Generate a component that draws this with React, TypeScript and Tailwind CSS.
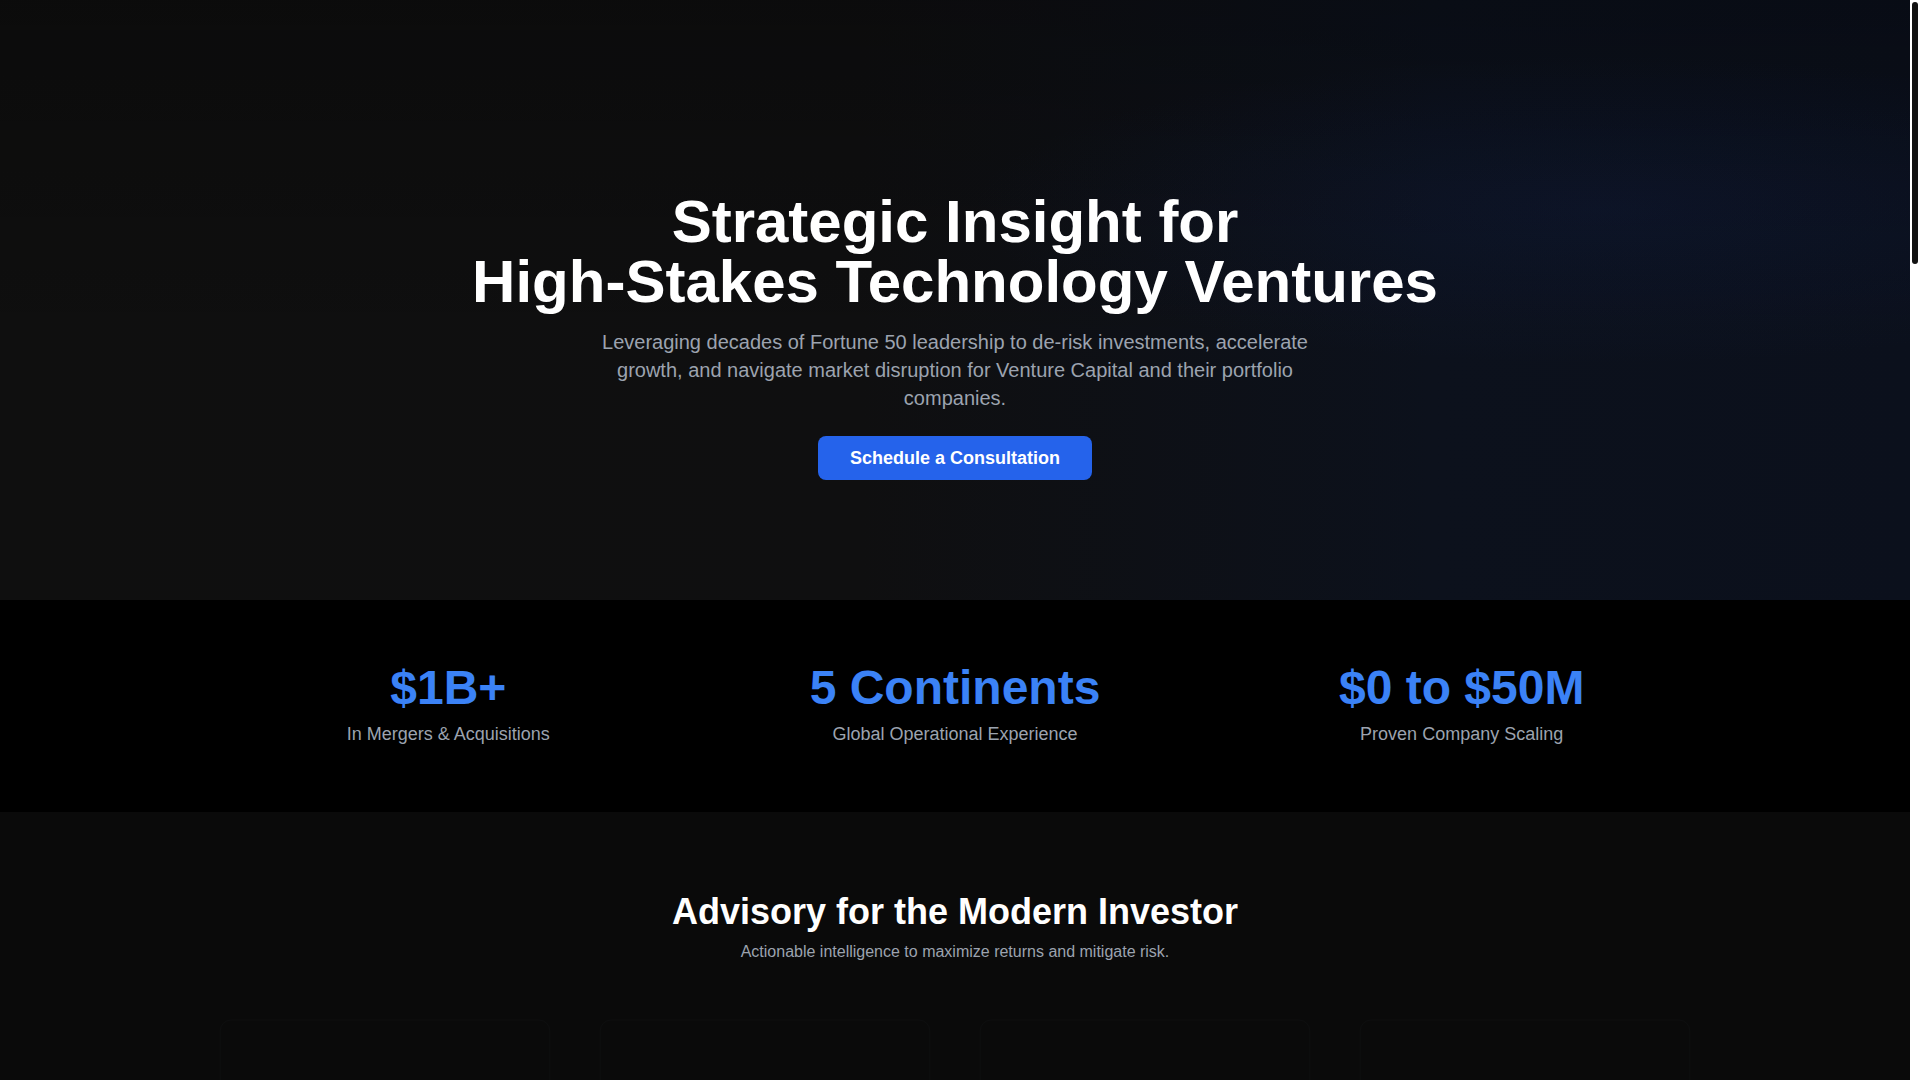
import { TrendingUp, ShieldCheck, Globe, Rocket, Mail, Linkedin } from "lucide-react";

const stats = [
  { value: "$1B+", label: "In Mergers & Acquisitions" },
  { value: "5 Continents", label: "Global Operational Experience" },
  { value: "$0 to $50M", label: "Proven Company Scaling" },
];

const services = [
  {
    icon: TrendingUp,
    title: "Due Diligence",
    body: "Deep technical and operational assessment of targets before capital is committed.",
  },
  {
    icon: ShieldCheck,
    title: "Risk Mitigation",
    body: "Identify execution risk early and put the right guardrails around every investment.",
  },
  {
    icon: Globe,
    title: "Global Expansion",
    body: "Playbooks for entering new markets, built from operating across five continents.",
  },
  {
    icon: Rocket,
    title: "Portfolio Acceleration",
    body: "Hands-on guidance that helps portfolio companies scale revenue and teams.",
  },
];

const steps = [
  { n: "01", title: "Assess", body: "Understand the thesis, the team and the technology behind it." },
  { n: "02", title: "Advise", body: "Deliver clear, actionable recommendations to the partners." },
  { n: "03", title: "Accelerate", body: "Work alongside leadership to turn the plan into results." },
];

// thin page scrollbar of the live site, drawn over the right edge
function ScrollRail() {
  return (
    <div aria-hidden className="fixed top-0 right-0 w-[10px] h-screen bg-white px-[2px] pt-[2px]">
      <div className="h-[262px] rounded-[4px] bg-[#111111]" />
    </div>
  );
}

export default function App() {
  return (
    <div className="bg-white">
      <div className="mr-[10px] bg-[#0a0a0a] text-white [font-family:'Liberation_Sans',Arial,sans-serif]">
        {/* Hero */}
        <section className="h-[600px] pt-48 pb-30 px-6 text-center [background:radial-gradient(ellipse_at_84%_35%,rgba(23,45,110,0.16),transparent_28%),linear-gradient(to_bottom,rgba(0,0,0,0.25),rgba(0,0,0,0)_60%),linear-gradient(to_right,#0f0f0f_0%,#0f0f10_45%,#0c111c_75%,#0b101c_100%)]">
          <div className="flex flex-col items-center">
            <h1 className="text-6xl font-bold leading-none mb-4">
              Strategic Insight for
              <br />
              High-Stakes Technology Ventures
            </h1>
            <p className="max-w-3xl text-xl text-[#9ca3af] mb-6">
              Leveraging decades of Fortune 50 leadership to de-risk investments, accelerate growth, and
              navigate market disruption for Venture Capital and their portfolio companies.
            </p>
            <button className="bg-[#2563eb] text-white text-lg font-bold px-8 py-2 rounded-lg">
              Schedule a Consultation
            </button>
          </div>
        </section>

        {/* Stats */}
        <section className="bg-black py-16">
          <div className="max-w-[1536px] mx-auto px-6 grid grid-cols-3 gap-8 text-center">
            {stats.map((s) => (
              <div key={s.value}>
                <div className="text-5xl font-bold leading-none text-[#3b82f6]">{s.value}</div>
                <div className="mt-2 text-lg text-[#9ca3af]">{s.label}</div>
              </div>
            ))}
          </div>
        </section>

        {/* Services (cards still in their fade-in start state) */}
        <section className="bg-[#0a0a0a] py-20">
          <div className="max-w-[1536px] mx-auto px-6">
            <div className="text-center mb-12">
              <h2 className="text-4xl font-bold">Advisory for the Modern Investor</h2>
              <p className="mt-2 text-[#9ca3af]">Actionable intelligence to maximize returns and mitigate risk.</p>
            </div>
            <div className="grid grid-cols-4 gap-8">
              {services.map((s) => (
                <div
                  key={s.title}
                  className="opacity-[0.06] scale-95 rounded-xl border border-gray-600 bg-[#141414] shadow-lg shadow-white/5 px-8 pt-20 pb-8 h-[300px]"
                >
                  <s.icon className="w-8 h-8 text-[#3b82f6] mb-6" />
                  <h3 className="text-xl font-bold mb-3">{s.title}</h3>
                  <p className="text-[#9ca3af]">{s.body}</p>
                </div>
              ))}
            </div>
          </div>
        </section>

        {/* About */}
        <section className="bg-black py-24 min-h-[900px]">
          <div className="max-w-[1536px] mx-auto px-6 grid grid-cols-2 gap-16 items-center">
            <div>
              <h2 className="text-4xl font-bold mb-6">Operator Experience, Investor Perspective</h2>
              <p className="text-lg text-[#9ca3af] mb-4">
                Decades inside Fortune 50 technology organizations, leading product, engineering and
                operations through growth, integration and transformation.
              </p>
              <p className="text-lg text-[#9ca3af]">
                That experience now supports investment teams that need a clear view of what it takes to
                build, scale and exit technology companies.
              </p>
            </div>
            <div className="h-[560px] rounded-2xl border border-gray-800 bg-gradient-to-br from-[#0f172a] to-[#0a0a0a]" />
          </div>
        </section>

        {/* Approach */}
        <section className="bg-[#0a0a0a] py-24 min-h-[800px]">
          <div className="max-w-[1536px] mx-auto px-6">
            <h2 className="text-4xl font-bold text-center mb-16">A Proven Approach</h2>
            <div className="grid grid-cols-3 gap-8">
              {steps.map((s) => (
                <div key={s.n} className="rounded-xl border border-gray-800 bg-[#111111] p-8">
                  <div className="text-[#3b82f6] text-3xl font-bold mb-4">{s.n}</div>
                  <h3 className="text-2xl font-bold mb-3">{s.title}</h3>
                  <p className="text-[#9ca3af]">{s.body}</p>
                </div>
              ))}
            </div>
          </div>
        </section>

        {/* Contact */}
        <section className="bg-black py-24 min-h-[900px] flex items-center">
          <div className="max-w-3xl mx-auto px-6 text-center">
            <h2 className="text-4xl font-bold mb-4">Ready to De-Risk Your Next Investment?</h2>
            <p className="text-xl text-[#9ca3af] mb-8">
              Let&apos;s discuss how strategic insight can strengthen your portfolio.
            </p>
            <button className="bg-[#2563eb] text-white text-lg font-bold px-8 py-2 rounded-lg">
              Schedule a Consultation
            </button>
          </div>
        </section>

        {/* Footer */}
        <footer className="bg-[#0a0a0a] border-t border-gray-900 min-h-[426px] py-16">
          <div className="max-w-[1536px] mx-auto px-6 flex items-center justify-between text-gray-500">
            <span>© 2024 Strategic Technology Advisory. All rights reserved.</span>
            <div className="flex gap-4">
              <Mail className="w-5 h-5" />
              <Linkedin className="w-5 h-5" />
            </div>
          </div>
        </footer>
      </div>
      <ScrollRail />
    </div>
  );
}
